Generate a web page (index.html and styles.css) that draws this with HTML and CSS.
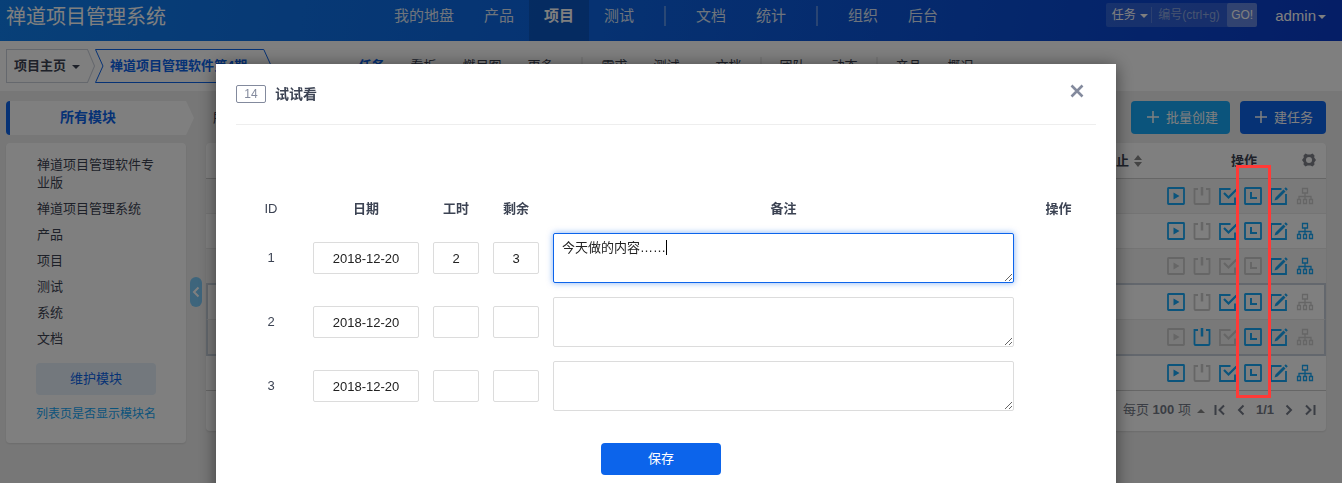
FILE: index.html
```html
<!DOCTYPE html>
<html lang="zh-CN">
<head>
  <meta charset="utf-8">
  <title>禅道项目管理系统</title>
  <link rel="stylesheet" href="styles.css">
</head>
<body>

  <svg class="sprite" aria-hidden="true">
    <symbol id="i-play" viewBox="0 0 18 18"><rect x="1" y="1" width="16" height="16" rx=".5" fill="none" stroke="currentColor" stroke-width="1.800"/><path d="M6.500 5.500l6 3.500-6 3.500z" fill="currentColor"/></symbol>
    <symbol id="i-power" viewBox="0 0 18 18"><path d="M5 2H1.500v14q0 1 1 1h13q1 0 1-1V2H13" fill="none" stroke="currentColor" stroke-width="1.800"/><path d="M9 0v8.500" stroke="currentColor" stroke-width="2.500"/></symbol>
    <symbol id="i-check" viewBox="0 0 18 18"><path d="M11.500 2H1v15h15v-6.500" fill="none" stroke="currentColor" stroke-width="1.800"/><path d="M5 6l4.500 4.500L17.500 2.500" fill="none" stroke="currentColor" stroke-width="2.200"/></symbol>
    <symbol id="i-clock" viewBox="0 0 18 18"><rect x="1" y="1" width="16" height="16" rx=".5" fill="none" stroke="currentColor" stroke-width="1.800"/><path d="M7 5v6h6" fill="none" stroke="currentColor" stroke-width="2"/></symbol>
    <symbol id="i-edit" viewBox="0 0 18 18"><path d="M11.500 2H1v15h15V7" fill="none" stroke="currentColor" stroke-width="1.800"/><path d="M4.500 13.500l1-3 8-8 2 2-8 8zM14.300 1.700L15.800 .2l2 2-1.500 1.500z" fill="currentColor"/></symbol>
    <symbol id="i-tree" viewBox="0 0 18 18"><path d="M6.500 1.500h5v4.500h-5zM1.500 12.500h3v4h-3zM7.500 12.500h3v4h-3zM13.500 12.500h3v4h-3zM9 6v6.500M3 12.500v-3h12v3" fill="none" stroke="currentColor" stroke-width="1.300"/></symbol>
  </svg>

  <header class="header">
    <h1 class="brand">禅道项目管理系统</h1>
    <nav class="main-nav">
      <a href="#">我的地盘</a>
      <a href="#">产品</a>
      <a href="#" class="active">项目</a>
      <a href="#">测试</a>
      <i class="divider"></i>
      <a href="#">文档</a>
      <a href="#">统计</a>
      <i class="divider"></i>
      <a href="#">组织</a>
      <a href="#">后台</a>
    </nav>
    <div class="header-tools">
      <form class="search">
        <button type="button" class="search-type">任务<i class="caret"></i></button>
        <input type="text" class="search-input" placeholder="编号(ctrl+g)" aria-label="编号">
        <button type="button" class="search-go">GO!</button>
      </form>
      <a href="#" class="user">admin<i class="caret"></i></a>
    </div>
  </header>

  <div class="subheader">
    <div class="crumbs">
      <a href="#" class="crumb crumb-home">
        <svg viewBox="0 0 89 34" preserveAspectRatio="none"><path d="M.5 .5H81.500L88.500 17l-7 16.500H.5z"/></svg>
        <span>项目主页</span><i class="caret"></i>
      </a>
      <a href="#" class="crumb crumb-current">
        <svg viewBox="0 0 178 34" preserveAspectRatio="none"><path d="M.5 .5H169.500L177 17l-7.500 16.500H.5L8 17z"/></svg>
        <span>禅道项目管理软件第4期</span>
      </a>
    </div>
    <nav class="sub-nav">
      <a href="#" class="active">任务</a>
      <a href="#">看板</a>
      <a href="#">燃尽图</a>
      <a href="#">更多<i class="caret"></i></a>
      <i class="divider"></i>
      <a href="#">需求</a>
      <a href="#">测试<i class="caret"></i></a>
      <a href="#">文档</a>
      <i class="divider"></i>
      <a href="#">团队</a>
      <a href="#">动态</a>
      <i class="divider"></i>
      <a href="#">产品</a>
      <a href="#">概况</a>
    </nav>
  </div>

  <main class="main">
    <aside class="sidebar">
      <div class="sidebar-title">所有模块</div>
      <div class="card module-card">
        <ul class="modules">
          <li><a href="#">禅道项目管理软件专业版</a></li>
          <li><a href="#">禅道项目管理系统</a></li>
          <li><a href="#">产品</a></li>
          <li><a href="#">项目</a></li>
          <li><a href="#">测试</a></li>
          <li><a href="#">系统</a></li>
          <li><a href="#">文档</a></li>
        </ul>
        <button type="button" class="btn btn-soft">维护模块</button>
        <a href="#" class="module-link">列表页是否显示模块名</a>
      </div>
      <button type="button" class="collapse" aria-label="收起">
        <svg width="8" height="12" viewBox="0 0 8 12"><path d="M6.500 1.500L2 6l4.500 4.500" fill="none" stroke="currentColor" stroke-width="2"/></svg>
      </button>
    </aside>

    <section class="content">
      <div class="toolbar">
        <a href="#" class="filter">所有</a>
        <button type="button" class="btn btn-info"><svg width="12" height="12" viewBox="0 0 12 12"><path d="M6 0v12M0 6h12" stroke="currentColor" stroke-width="1.500"/></svg>批量创建</button>
        <button type="button" class="btn btn-primary"><svg width="12" height="12" viewBox="0 0 12 12"><path d="M6 0v12M0 6h12" stroke="currentColor" stroke-width="1.500"/></svg>建任务</button>
      </div>
      <div class="card">
        <table class="tasks">
          <thead>
            <tr>
              <th></th>
              <th class="col-deadline">截止<svg width="8" height="12" viewBox="0 0 8 12"><path d="M0 5l4-5 4 5zM0 7h8l-4 5z" fill="#888"/></svg></th>
              <th class="col-actions">操作<svg class="gear" width="14" height="14" viewBox="0 0 14 14"><path fill-rule="evenodd" d="M3.500 .5L5.500 1.500h3l2-1 2 2-.3 2L14 7l-1.800 2.500.3 2-2 2-2-1h-3l-2 1-2-2 .3-2L0 7l1.800-2.500-.3-2zM7 4a3 3 0 1 0 0 6a3 3 0 1 0 0-6z" fill="#80828a"/></svg></th>
            </tr>
          </thead>
          <tbody>
            <tr>
              <td></td><td></td>
              <td><div class="actions"><svg><use href="#i-play"/></svg><svg class="off"><use href="#i-power"/></svg><svg><use href="#i-check"/></svg><svg><use href="#i-clock"/></svg><svg><use href="#i-edit"/></svg><svg class="off"><use href="#i-tree"/></svg></div></td>
            </tr>
            <tr>
              <td></td><td></td>
              <td><div class="actions"><svg><use href="#i-play"/></svg><svg class="off"><use href="#i-power"/></svg><svg><use href="#i-check"/></svg><svg><use href="#i-clock"/></svg><svg><use href="#i-edit"/></svg><svg><use href="#i-tree"/></svg></div></td>
            </tr>
            <tr class="before-group">
              <td></td><td></td>
              <td><div class="actions"><svg class="off"><use href="#i-play"/></svg><svg class="off"><use href="#i-power"/></svg><svg class="off"><use href="#i-check"/></svg><svg class="off"><use href="#i-clock"/></svg><svg><use href="#i-edit"/></svg><svg><use href="#i-tree"/></svg></div></td>
            </tr>
            <tr class="group">
              <td></td><td></td>
              <td><div class="actions"><svg><use href="#i-play"/></svg><svg class="off"><use href="#i-power"/></svg><svg><use href="#i-check"/></svg><svg><use href="#i-clock"/></svg><svg><use href="#i-edit"/></svg><svg class="off"><use href="#i-tree"/></svg></div></td>
            </tr>
            <tr class="group group-end">
              <td></td><td></td>
              <td><div class="actions"><svg class="off"><use href="#i-play"/></svg><svg><use href="#i-power"/></svg><svg class="off"><use href="#i-check"/></svg><svg><use href="#i-clock"/></svg><svg><use href="#i-edit"/></svg><svg class="off"><use href="#i-tree"/></svg></div></td>
            </tr>
            <tr>
              <td></td><td></td>
              <td><div class="actions"><svg><use href="#i-play"/></svg><svg class="off"><use href="#i-power"/></svg><svg><use href="#i-check"/></svg><svg><use href="#i-clock"/></svg><svg><use href="#i-edit"/></svg><svg><use href="#i-tree"/></svg></div></td>
            </tr>
          </tbody>
        </table>
        <div class="pager">
          <button type="button" class="page-size">每页 <b>100</b> 项<i class="caret caret-up"></i></button>
          <svg viewBox="0 0 12 12"><path d="M1.500 1v10M10 1.500L5.500 6l4.500 4.500"/></svg>
          <svg viewBox="0 0 12 12"><path d="M8.500 1.500L4 6l4.500 4.500"/></svg>
          <b>1/1</b>
          <svg viewBox="0 0 12 12"><path d="M3.500 1.500L8 6l-4.500 4.500"/></svg>
          <svg viewBox="0 0 12 12"><path d="M2 1.500L6.500 6 2 10.500M10.500 1v10"/></svg>
        </div>
      </div>
    </section>
  </main>

  <div class="backdrop">
    <div class="modal" role="dialog" aria-labelledby="modalTitle">
      <div class="modal-header">
        <span class="label-id">14</span>
        <h2 id="modalTitle">试试看</h2>
        <button type="button" class="close" aria-label="关闭">
          <svg width="14" height="14" viewBox="0 0 14 14"><path d="M1.500 1.500l11 11M12.500 1.500l-11 11" stroke="currentColor" stroke-width="2.600"/></svg>
        </button>
      </div>
      <form>
        <table class="efforts">
          <thead>
            <tr>
              <th class="w-id">ID</th>
              <th class="w-date">日期</th>
              <th class="w-hour">工时</th>
              <th class="w-hour">剩余</th>
              <th>备注</th>
              <th class="w-action">操作</th>
            </tr>
          </thead>
          <tbody>
            <tr>
              <td>1</td>
              <td><input type="text" class="form-control" value="2018-12-20" aria-label="日期"></td>
              <td><input type="text" class="form-control" value="2" aria-label="工时"></td>
              <td><input type="text" class="form-control" value="3" aria-label="剩余"></td>
              <td>
                <div class="work-field">
                  <textarea class="form-control" id="work1" aria-label="备注" autofocus>今天做的内容……</textarea>
                  <i class="text-cursor"></i>
                </div>
              </td>
              <td></td>
            </tr>
            <tr>
              <td>2</td>
              <td><input type="text" class="form-control" value="2018-12-20" aria-label="日期"></td>
              <td><input type="text" class="form-control" aria-label="工时"></td>
              <td><input type="text" class="form-control" aria-label="剩余"></td>
              <td><textarea class="form-control" aria-label="备注"></textarea></td>
              <td></td>
            </tr>
            <tr>
              <td>3</td>
              <td><input type="text" class="form-control" value="2018-12-20" aria-label="日期"></td>
              <td><input type="text" class="form-control" aria-label="工时"></td>
              <td><input type="text" class="form-control" aria-label="剩余"></td>
              <td><textarea class="form-control" aria-label="备注"></textarea></td>
              <td></td>
            </tr>
          </tbody>
        </table>
        <div class="form-actions">
          <button type="button" class="btn btn-primary btn-wide">保存</button>
        </div>
      </form>
    </div>
  </div>

  <div class="marker"></div>

  <script>
    const work = document.getElementById("work1");
    work.focus();
    work.setSelectionRange(work.value.length, work.value.length);
  </script>
</body>
</html>
```
FILE: styles.css
```css
* {
  box-sizing: border-box;
}

body {
  margin: 0;
  min-height: 100vh;
  overflow: hidden;
  position: relative;
  background: #efefef;
  color: #3c4353;
  font-family: "Liberation Sans", "Noto Sans CJK SC", sans-serif;
  font-size: 13px;
  line-height: 18px;
}

a {
  color: inherit;
  text-decoration: none;
}

button,
input,
textarea {
  font: inherit;
  color: inherit;
}

button {
  border: 0;
  padding: 0;
  background: none;
  cursor: pointer;
}

.sprite {
  display: none;
}

.caret {
  display: inline-block;
  margin-left: 4px;
  vertical-align: middle;
  border: 4px solid transparent;
  border-top-color: currentColor;
  border-bottom: 0;
}

.caret-up {
  border-top: 0;
  border-bottom: 4px solid #888;
}

/* header */
.header {
  display: grid;
  grid-template-columns: 1fr auto 1fr;
  height: 41px;
  padding: 0 16px 0 6px;
  color: #fff;
  background: linear-gradient(100deg, #1080f0, #0c64e4 45%, #0a3ccc);
}

.brand {
  margin: 0;
  font-size: 20px;
  font-weight: normal;
  line-height: 34px;
}

.main-nav {
  display: flex;
  font-size: 15px;
  line-height: 32px;
}

.main-nav a {
  padding: 0 15px;
  color: #dfe8f8;
}

.main-nav .active {
  color: #fff;
  font-weight: bold;
  background: rgba(0, 0, 0, 0.15);
}

.main-nav .divider {
  width: 2px;
  height: 20px;
  margin: 6px 15px;
  background: rgba(255, 255, 255, 0.3);
}

.header-tools {
  display: flex;
  justify-content: flex-end;
  align-items: flex-start;
  padding-top: 3px;
}

.search {
  display: flex;
  align-items: center;
  height: 24px;
  border-radius: 2px;
  background: rgba(255, 255, 255, 0.15);
  font-size: 12px;
}

.search-type {
  width: 45px;
  padding-left: 2px;
}

.search-input {
  width: 76px;
  height: 16px;
  padding: 0 0 0 6px;
  border: 0;
  border-left: 1px solid rgba(255, 255, 255, 0.2);
  background: none;
}

.search-input::placeholder {
  color: #8fa8e0;
}

.search-go {
  width: 30px;
  height: 24px;
  border-radius: 2px;
  background: rgba(255, 255, 255, 0.25);
}

.user {
  margin-left: 18px;
  font-size: 15px;
  line-height: 26px;
}

.user .caret {
  margin-left: 2px;
}

/* second bar */
.subheader {
  display: grid;
  grid-template-columns: 1fr auto 1fr;
  align-items: center;
  height: 50px;
  padding: 0 16px 0 6px;
  background: #fff;
}

.crumbs {
  display: flex;
  font-weight: bold;
}

.crumb {
  position: relative;
  flex: none;
  height: 34px;
  padding: 0 15px 0 8px;
  line-height: 33px;
}

.crumb svg {
  position: absolute;
  left: 0;
  top: 0;
  width: 100%;
  height: 100%;
  fill: none;
  stroke: #cbd0db;
}

.crumb span {
  position: relative;
}

.crumb .caret {
  margin-left: 6px;
}

.crumb-current {
  padding: 0 25px 0 15px;
  color: #0c64eb;
}

.crumb-current svg {
  stroke: #0c64eb;
}

.sub-nav {
  display: flex;
}

.sub-nav a {
  padding: 0 13px;
}

.sub-nav .active {
  color: #0c64eb;
  font-weight: bold;
}

.sub-nav .caret {
  margin-left: 2px;
}

.sub-nav .divider {
  width: 2px;
  margin: 0 5px;
  background: #eee;
}

/* page body */
.main {
  display: flex;
  gap: 20px;
  padding: 10px 16px 0 6px;
}

.card {
  background: #fff;
  border-radius: 4px;
  box-shadow: 0 1px 2px rgba(0, 0, 0, 0.1);
}

.sidebar {
  position: relative;
  flex: none;
  width: 180px;
}

.sidebar-title {
  width: 188px;
  height: 34px;
  margin-bottom: 8px;
  padding-right: 28px;
  border-left: 4px solid #0c64eb;
  border-radius: 4px 0 0 4px;
  background: #fff;
  clip-path: polygon(0 0, 180px 0, 100% 50%, 180px 100%, 0 100%);
  color: #0c64eb;
  font-size: 14px;
  font-weight: bold;
  line-height: 33px;
  text-align: center;
}

.module-card {
  padding: 9px 30px 20px;
}

.modules {
  margin: 0 0 11px;
  padding: 0;
  list-style: none;
}

.modules li {
  padding: 4px 0 4px 1px;
}

.btn {
  height: 33px;
  border-radius: 4px;
  color: #fff;
}

.btn svg {
  margin-right: 7px;
  vertical-align: -1px;
}

.btn-primary {
  padding: 0 13px 0 15px;
  background: #0c64eb;
}

.btn-info {
  padding: 0 12px 0 16px;
  background: #16a8f8;
}

.btn-soft {
  width: 100%;
  height: 32px;
  color: #0c64eb;
  background: #e6f1fa;
}

.btn-wide {
  width: 120px;
  height: 32px;
  padding: 0;
}

.module-link {
  display: block;
  margin-top: 10px;
  color: #16a8f8;
  font-size: 12px;
  white-space: nowrap;
}

.collapse {
  position: absolute;
  left: 184px;
  top: 176px;
  display: flex;
  align-items: center;
  justify-content: center;
  width: 12px;
  height: 30px;
  border-radius: 6px;
  color: #fff;
  background: #7ccaf8;
}

.content {
  flex: 1;
}

.toolbar {
  display: flex;
  align-items: center;
  gap: 10px;
  height: 33px;
  margin-bottom: 9px;
}

.filter {
  margin-right: auto;
  padding-left: 7px;
}

.tasks {
  width: 100%;
  border-spacing: 0;
}

.tasks th {
  height: 36px;
  padding: 0;
  border-bottom: 1px solid #ccc;
}

.tasks td {
  height: 35px;
  padding: 0;
  border-bottom: 1px solid #e8e8e8;
}

.tasks tbody tr:nth-child(odd) {
  background: #f5f5f5;
}

.tasks tbody tr.group-end {
  background: #f2f2f2;
}

.tasks tbody tr:last-child td {
  border-color: #ccc;
}

.tasks .before-group td,
.tasks .group-end td {
  height: 36px;
  border-bottom: 2px solid #c6cfdb;
}

.tasks .group td:first-child {
  border-left: 2px solid #c6cfdb;
}

.tasks .group td:last-child {
  border-right: 2px solid #c6cfdb;
}

.tasks .col-deadline {
  width: 120px;
  padding-right: 18px;
  text-align: right;
}

.col-deadline svg {
  margin-left: 5px;
  vertical-align: -2px;
}

.tasks .col-actions {
  width: 166px;
  padding-right: 10px;
  text-align: right;
}

.gear {
  margin-left: 45px;
  vertical-align: -2px;
}

.actions {
  display: flex;
  justify-content: space-between;
  width: 147px;
  margin-left: 7px;
  color: #16a8f8;
}

.actions svg {
  width: 18px;
  height: 18px;
}

.actions .off {
  color: #ccc;
}

.pager {
  display: flex;
  align-items: center;
  justify-content: flex-end;
  gap: 9px;
  height: 40px;
  padding: 0 10px 2px 0;
  color: #757b88;
}

.pager svg {
  width: 12px;
  height: 12px;
  fill: none;
  stroke: currentColor;
  stroke-width: 2;
}

.page-size .caret {
  margin-left: 6px;
}

/* modal */
.backdrop {
  position: fixed;
  inset: 0;
  display: flex;
  justify-content: center;
  align-items: flex-start;
  padding: 64px 16px 0 6px;
  overflow: hidden;
  background: rgba(0, 0, 0, 0.5);
}

.modal {
  width: 900px;
  padding: 0 20px 40px;
  background: #fff;
  box-shadow: 0 2px 16px rgba(0, 0, 0, 0.5);
}

.modal-header {
  display: flex;
  align-items: center;
  gap: 9px;
  height: 61px;
  border-bottom: 1px solid #eee;
}

.label-id {
  width: 30px;
  height: 18px;
  border: 1px solid #838a9d;
  border-radius: 2px;
  color: #838a9d;
  font-size: 12px;
  line-height: 16px;
  text-align: center;
}

.modal-header h2 {
  margin: 0;
  font-size: 14px;
}

.close {
  margin: 0 12px 6px auto;
  color: #838a9d;
  line-height: 0;
}

.efforts {
  width: 100%;
  margin-top: 67px;
  border-spacing: 0;
  table-layout: fixed;
}

.efforts th {
  height: 34px;
  padding: 0;
}

.efforts td {
  height: 64px;
  padding: 0 7px;
  text-align: center;
}

.efforts .w-id {
  width: 70px;
  font-weight: normal;
}

.w-date {
  width: 120px;
}

.w-hour {
  width: 60px;
}

.w-action {
  width: 75px;
}

.form-control {
  display: block;
  width: 100%;
  height: 32px;
  padding: 5px 8px;
  border: 1px solid #dcdcdc;
  border-radius: 2px;
  background: #fff;
  color: #222;
  text-align: center;
}

textarea.form-control {
  height: 50px;
  text-align: left;
  resize: vertical;
}

.form-control:focus {
  outline: 0;
  border-color: #0c64eb;
  box-shadow: 0 0 6px rgba(12, 100, 235, 0.5);
}

.work-field {
  position: relative;
}

.work-field textarea {
  caret-color: transparent;
}

.text-cursor {
  position: absolute;
  left: 113px;
  top: 7px;
  width: 1px;
  height: 15px;
  background: #000;
}

.form-actions {
  padding: 25px 10px 0 0;
  text-align: center;
}

/* frame over the log-hours column */
.marker {
  position: absolute;
  right: 71px;
  top: 165px;
  width: 35px;
  height: 233px;
  border: 3px solid #ff3a37;
}
```
